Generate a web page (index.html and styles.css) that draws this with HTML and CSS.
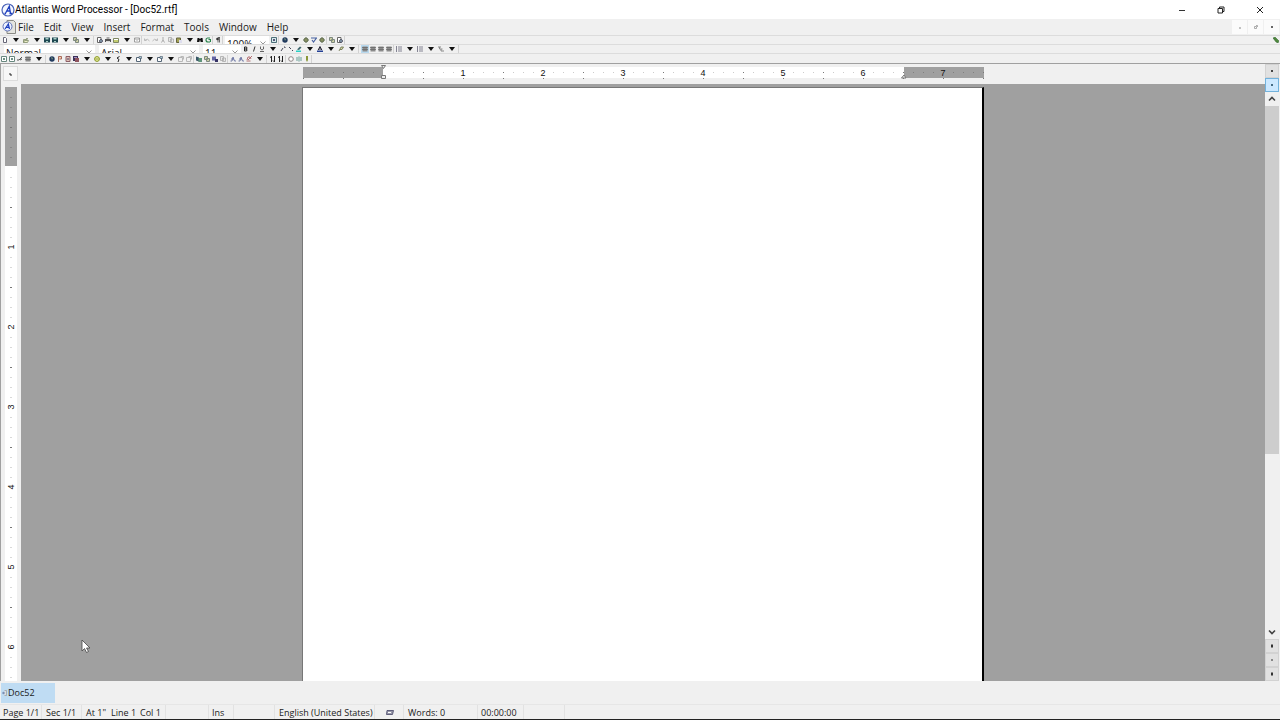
FILE: index.html
```html
<!DOCTYPE html>
<html lang="en">
<head>
<meta charset="utf-8">
<title>Atlantis Word Processor - [Doc52.rtf]</title>
<link rel="stylesheet" href="styles.css">
</head>
<body>
<svg class="defs" aria-hidden="true">
  <symbol id="logo" viewBox="0 0 14 14"><circle cx="7" cy="7" r="6" fill="#f4f7ff" stroke="#4a63b8" stroke-width="1.2"/><path d="M3.500 10.500h1.500M8.500 10.500h2.500M4.500 10.300L8.300 3.300l1.200 7M5.800 8h3.200" fill="none" stroke="#1d3fc0" stroke-width="1.300"/></symbol>
  <symbol id="down" viewBox="0 0 6 4"><path d="M0 0h6L3 4z" fill="#111"/></symbol>
  <symbol id="chev" viewBox="0 0 6 4"><path d="M.5.5L3 3 5.500.5" fill="none" stroke="#999"/></symbol>
  <symbol id="new" viewBox="0 0 6 6"><path d="M1.500.5h2l1 1v4h-3z" fill="#fff" stroke="#667"/></symbol>
  <symbol id="open" viewBox="0 0 6 6"><path d="M.5 5.500V2.500h4M.5 5.500l1-2h4l-1 2zM3 1.500h2" fill="#eef0c8" stroke="#7d8a68" stroke-width=".8"/></symbol>
  <symbol id="save" viewBox="0 0 6 6"><path d="M0 .5h6v5H0z" fill="#1c4650"/><path d="M1.500 1h3v1.500h-3zM2 4h2v1H2z" fill="#a9d0c7"/></symbol>
  <symbol id="multi" viewBox="0 0 6 6"><path d="M.5.5h3v3h-3zM2.500 2.500h3v3h-3z" fill="#cdd0a4" stroke="#7d887f"/></symbol>
  <symbol id="preview" viewBox="0 0 6 6"><path d="M.5.500h3.500v5H.5z" fill="#fff" stroke="#666"/><circle cx="4" cy="4" r="1.400" fill="#acd" stroke="#445"/></symbol>
  <symbol id="print" viewBox="0 0 6 6"><path d="M1.500 0h3v2h-3z" fill="#aaa"/><path d="M0 2h6v3H0z" fill="#555"/><path d="M1 4h4v1H1z" fill="#ddd"/></symbol>
  <symbol id="box" viewBox="0 0 6 6"><path d="M.5 1.500h5v4h-5z" fill="#c3cc70" stroke="#7e8762"/><path d="M1 2h4v1H1z" fill="#fff"/></symbol>
  <symbol id="mail" viewBox="0 0 6 6"><path d="M.5 1h5v4h-5zM1 1.500L3 3.500l2-2" fill="#fff" stroke="#888" stroke-width=".8"/></symbol>
  <symbol id="undo" viewBox="0 0 6 6"><path d="M.5 1.500v2h2M.8 3.200Q4 1 5.500 4" fill="none" stroke="#bbb"/></symbol>
  <symbol id="redo" viewBox="0 0 6 6"><path d="M5.500 1.500v2h-2M5.200 3.200Q2 1 .5 4" fill="none" stroke="#bbb"/></symbol>
  <symbol id="cut" viewBox="0 0 6 6"><path d="M3 0v3L1.500 5.500M3 3l1.500 2.500" fill="none" stroke="#aaa"/></symbol>
  <symbol id="copy" viewBox="0 0 6 6"><path d="M.5.500h3v4h-3zM2.500 2h3v3.500h-3z" fill="#e8e8e8" stroke="#aaa" stroke-width=".8"/></symbol>
  <symbol id="paste" viewBox="0 0 6 6"><path d="M.5 1h4v4.500h-4z" fill="#a4a255" stroke="#66653f"/><path d="M3 3h3v3H3z" fill="#dde"/></symbol>
  <symbol id="find" viewBox="0 0 6 6"><path d="M.5 1h2v1h1V1h2L6 5H3.500V3.500h-1V5H0z" fill="#111"/></symbol>
  <symbol id="replace" viewBox="0 0 6 6"><path d="M5 1H2.500Q1 1 1 3t2 2h2M3.500 2.500h2V5" fill="none" stroke="#27824a" stroke-width="1.200"/></symbol>
  <symbol id="para" viewBox="0 0 6 6"><path d="M3 .5h2M3 .5v5M4.500.5v5" stroke="#333" stroke-width=".7"/><circle cx="2.500" cy="2" r="1.300" fill="#333"/></symbol>
  <symbol id="panel" viewBox="0 0 6 6"><path d="M.5.500h5v5h-5z" fill="#d7e9ec" stroke="#4d6f78"/><path d="M2 2h2v2H2z" fill="#557"/></symbol>
  <symbol id="globe" viewBox="0 0 6 6"><circle cx="3" cy="3" r="2.700" fill="#223a5e"/><path d="M2 1l2 1-1 2z" fill="#7b9b7c"/></symbol>
  <symbol id="gear" viewBox="0 0 6 6"><circle cx="3" cy="3" r="2" fill="#c4c77b" stroke="#59674c"/><path d="M3 0v6M0 3h6" stroke="#59674c" stroke-width=".7"/></symbol>
  <symbol id="check" viewBox="0 0 6 6"><path d="M0 1h6M1 3l1.500 2L5.500 1" fill="none" stroke="#4560a0" stroke-width="1.200"/></symbol>
  <symbol id="bold" viewBox="0 0 6 6"><path d="M1.500 1v4M1.500 1h2q1 1 0 2h-2M3 3q2 .5.500 2h-2" fill="none" stroke="#222"/></symbol>
  <symbol id="italic" viewBox="0 0 6 6"><path d="M4 .5L2.500 5.500" stroke="#333"/></symbol>
  <symbol id="under" viewBox="0 0 6 6"><path d="M1.500.5V3q1.500 2 3 0V.5M1 5.500h4" fill="none" stroke="#555" stroke-width=".9"/></symbol>
  <symbol id="sup" viewBox="0 0 6 6"><path d="M1 5l2-3M4 1h1v1" fill="none" stroke="#445"/></symbol>
  <symbol id="sub" viewBox="0 0 6 6"><path d="M1 1l2 2M4 4.500h1" fill="none" stroke="#445"/></symbol>
  <symbol id="marker" viewBox="0 0 6 6"><path d="M1 3.500L4 .5l1.500 1L3 4z" fill="#3b646b"/><path d="M0 4.500h5V6H0z" fill="#29d0c5"/></symbol>
  <symbol id="color" viewBox="0 0 6 6"><path d="M1.200 4L3 .5 4.800 4M2 3h2" fill="none" stroke="#223"/><path d="M0 4.500h6V6H0z" fill="#233f94"/></symbol>
  <symbol id="brush" viewBox="0 0 6 6"><path d="M1 5L3 1h2.500L4 3.500H2" fill="#d2d6a8" stroke="#697047" stroke-width=".8"/></symbol>
  <symbol id="lines" viewBox="0 0 6 6"><path d="M.5.500h5v5h-5z" fill="#8a8a8a"/><path d="M0 1.500h6M0 3.500h6" stroke="#666" stroke-width=".7"/></symbol>
  <symbol id="list" viewBox="0 0 6 6"><path d="M.5 0v6M2 1h4M2 3h4M2 5h4" stroke="#778" stroke-width=".9"/></symbol>
  <symbol id="tree" viewBox="0 0 6 6"><path d="M0 1h3M1.500 3h3M3 5h3M1.500 1v2M3 3v2" fill="none" stroke="#888"/></symbol>
  <symbol id="page" viewBox="0 0 6 6"><path d="M.5.500h5v5h-5z" fill="#fff" stroke="#68887f"/><path d="M2 2h2v2H2z" fill="#6d9184"/></symbol>
  <symbol id="pen" viewBox="0 0 6 6"><path d="M0 4h2l3-3M3 4l2-1" fill="none" stroke="#555"/></symbol>
  <symbol id="red" viewBox="0 0 6 6"><path d="M1.500 6V.5h3v2.500h-2" fill="#f5cdb4" stroke="#a96a58"/></symbol>
  <symbol id="doc" viewBox="0 0 6 6"><path d="M1 .5h4v5H1z" fill="#e1c3b8" stroke="#8c5d65"/><path d="M2 3h2" stroke="#446"/></symbol>
  <symbol id="table" viewBox="0 0 6 6"><path d="M0 0h5v5H0z" fill="#3d3159"/><path d="M2 2h4v4H2z" fill="#8f545e"/><path d="M1 1h3v.8H1z" fill="#bad"/></symbol>
  <symbol id="smile" viewBox="0 0 6 6"><circle cx="3" cy="3" r="2.400" fill="#f0f5a0" stroke="#83921e"/><path d="M1.500 3h3" stroke="#66711c" stroke-width=".7"/></symbol>
  <symbol id="clip" viewBox="0 0 6 6"><path d="M4.500.5L2 2l2 1.500L3 6" fill="none" stroke="#222"/></symbol>
  <symbol id="frame" viewBox="0 0 6 6"><path d="M.5 1.500h4v4h-4z" fill="#fff" stroke="#567"/><path d="M3 .5h2.500v2H3z" fill="#acc6d3" stroke="#456" stroke-width=".6"/></symbol>
  <symbol id="pale" viewBox="0 0 6 6"><path d="M.5 1.500h4v4h-4zM2.500.5h3v3" fill="none" stroke="#b8b8b8"/></symbol>
  <symbol id="green" viewBox="0 0 6 6"><path d="M0 .5l3 1v4l-3-1z" fill="#385667"/><path d="M2.500 2H6v4H2.500z" fill="#60957a"/></symbol>
  <symbol id="violet" viewBox="0 0 6 6"><path d="M0 .5h4v4H0z" fill="#6465a4"/><path d="M3 3h3v3H3z" fill="#373466"/></symbol>
  <symbol id="sigma" viewBox="0 0 6 6"><path d="M.5 5h1.500L3 1l1.500 4H6M1 3h3" fill="none" stroke="#6870a0" stroke-width=".9"/></symbol>
  <symbol id="rose" viewBox="0 0 6 6"><path d="M.5 5h4M1 4l1-3h2l1 2M2 4l4-4" fill="none" stroke="#ad6265" stroke-width=".9"/></symbol>
  <symbol id="sort" viewBox="0 0 6 6"><path d="M1.500 0v6M4.500 0v6M0 1.500l1.500-1M3 4.500L4.500 6" stroke="#222"/></symbol>
  <symbol id="ring" viewBox="0 0 6 6"><circle cx="3" cy="3" r="2.300" fill="#fff" stroke="#8f8585"/></symbol>
  <symbol id="web" viewBox="0 0 6 6"><path d="M3 0v6M0 2h6M0 4h6M1 1v4M5 1v4" stroke="#7caaa4" stroke-width=".7"/></symbol>
  <symbol id="pencil" viewBox="0 0 6 6"><path d="M2 0h2v4L3 6 2 4z" fill="#8a9838"/></symbol>
  <symbol id="links" viewBox="0 0 6 6"><path d="M0 1l2-1 4 4-1 2-2-1zM1 1.500l1 1" fill="#4f8a3c" stroke="#2e5f2e" stroke-width=".5"/></symbol>
</svg>

<header class="titlebar">
  <svg class="logo"><use href="#logo"/></svg>
  <h1 class="title">Atlantis Word Processor - [Doc52.rtf]</h1>
  <div class="window-buttons">
    <button aria-label="Minimize"><svg viewBox="0 0 8 8"><path d="M1 4.500h6" stroke="#333"/></svg></button>
    <button aria-label="Restore"><svg viewBox="0 0 8 8"><path d="M1 2.500h4.500V7H1zM2.500 2.500V1H7v4.500H5.500" fill="none" stroke="#222"/></svg></button>
    <button aria-label="Close"><svg viewBox="0 0 8 8"><path d="M1 1l6 6M7 1L1 7" stroke="#222"/></svg></button>
  </div>
</header>

<nav class="menubar">
  <svg class="doc-logo" viewBox="0 0 14 14"><path d="M5 .5h6.500l2 2v11H5z" fill="#e4e4df" stroke="#8a8a85"/><circle cx="5.500" cy="6.500" r="4.500" fill="#eef2ff" stroke="#6073b8"/><path d="M3 9l3.300-5L7.500 9M4 7.300h3" fill="none" stroke="#1d3fc0" stroke-width="1.200"/></svg>
  <button>File</button><button>Edit</button><button>View</button><button>Insert</button><button>Format</button><button>Tools</button><button>Window</button><button>Help</button>
  <div class="child-buttons">
    <button aria-label="Minimize document"><svg viewBox="0 0 4 4"><path d="M1 3h2" stroke="#888"/></svg></button>
    <button aria-label="Restore document"><svg viewBox="0 0 4 4"><path d="M.5 1.500h2v2h-2zM2 .5h1.500V2" fill="none" stroke="#999" stroke-width=".8"/></svg></button>
    <button aria-label="Close document"><svg viewBox="0 0 4 4"><path d="M1 1l2 2M3 1L1 3" stroke="#666"/></svg></button>
  </div>
</nav>

<div class="toolbar" role="toolbar" aria-label="Standard">
  <button class="tool" aria-label="New"><svg><use href="#new"/></svg></button>
  <button class="drop" aria-label="New options"><svg><use href="#down"/></svg></button>
  <button class="tool" aria-label="Open"><svg><use href="#open"/></svg></button>
  <button class="drop" aria-label="Open options"><svg><use href="#down"/></svg></button>
  <button class="tool" aria-label="Save"><svg><use href="#save"/></svg></button>
  <button class="tool" aria-label="Save as"><svg><use href="#save"/></svg></button>
  <button class="drop" aria-label="Save options"><svg><use href="#down"/></svg></button>
  <button class="tool" aria-label="Documents"><svg><use href="#multi"/></svg></button>
  <button class="drop" aria-label="Documents options"><svg><use href="#down"/></svg></button>
  <i class="sep wide"></i>
  <button class="tool" aria-label="Preview"><svg><use href="#preview"/></svg></button>
  <button class="tool" aria-label="Print"><svg><use href="#print"/></svg></button>
  <button class="tool" aria-label="Export"><svg><use href="#box"/></svg></button>
  <button class="drop" aria-label="Export options"><svg><use href="#down"/></svg></button>
  <button class="tool" aria-label="Mail"><svg><use href="#mail"/></svg></button>
  <i class="sep"></i>
  <button class="tool" aria-label="Undo"><svg><use href="#undo"/></svg></button>
  <button class="tool" aria-label="Redo"><svg><use href="#redo"/></svg></button>
  <button class="tool" aria-label="Cut"><svg><use href="#cut"/></svg></button>
  <button class="tool" aria-label="Copy"><svg><use href="#copy"/></svg></button>
  <button class="tool" aria-label="Paste"><svg><use href="#paste"/></svg></button>
  <button class="drop" aria-label="Paste options"><svg><use href="#down"/></svg></button>
  <button class="tool" aria-label="Find"><svg><use href="#find"/></svg></button>
  <button class="tool" aria-label="Replace"><svg><use href="#replace"/></svg></button>
  <i class="sep"></i>
  <button class="tool" aria-label="Formatting marks"><svg><use href="#para"/></svg></button>
  <i class="sep"></i>
  <label class="combo zoom"><select aria-label="Zoom"><option>100%</option></select><svg><use href="#chev"/></svg></label>
  <button class="tool" aria-label="Full screen"><svg><use href="#panel"/></svg></button>
  <i class="sep wide"></i>
  <button class="tool" aria-label="Language"><svg><use href="#globe"/></svg></button>
  <button class="drop" aria-label="Language options"><svg><use href="#down"/></svg></button>
  <button class="tool" aria-label="Options"><svg><use href="#gear"/></svg></button>
  <button class="tool" aria-label="Spelling"><svg><use href="#check"/></svg></button>
  <button class="tool" aria-label="Autocorrect"><svg><use href="#gear"/></svg></button>
  <i class="sep"></i>
  <button class="tool" aria-label="Tip"><svg><use href="#multi"/></svg></button>
  <button class="tool" aria-label="Home"><svg><use href="#preview"/></svg></button>
  <i class="sep"></i>
  <button class="tool end" aria-label="Customize"><svg><use href="#links"/></svg></button>
</div>

<div class="toolbar" role="toolbar" aria-label="Formatting">
  <label class="combo style"><select aria-label="Style"><option>Normal</option></select><svg><use href="#chev"/></svg></label>
  <label class="combo font"><select aria-label="Font"><option>Arial</option></select><svg><use href="#chev"/></svg></label>
  <label class="combo size"><select aria-label="Font size"><option>11</option></select><svg><use href="#chev"/></svg></label>
  <button class="tool" aria-label="Bold"><svg><use href="#bold"/></svg></button>
  <button class="tool" aria-label="Italic"><svg><use href="#italic"/></svg></button>
  <button class="tool" aria-label="Underline"><svg><use href="#under"/></svg></button>
  <button class="drop" aria-label="Underline options"><svg><use href="#down"/></svg></button>
  <button class="tool" aria-label="Superscript"><svg><use href="#sup"/></svg></button>
  <button class="tool" aria-label="Subscript"><svg><use href="#sub"/></svg></button>
  <button class="tool" aria-label="Highlight"><svg><use href="#marker"/></svg></button>
  <button class="drop" aria-label="Highlight options"><svg><use href="#down"/></svg></button>
  <button class="tool" aria-label="Font color"><svg><use href="#color"/></svg></button>
  <button class="drop" aria-label="Font color options"><svg><use href="#down"/></svg></button>
  <button class="tool" aria-label="Format painter"><svg><use href="#brush"/></svg></button>
  <button class="drop" aria-label="Format painter options"><svg><use href="#down"/></svg></button>
  <i class="sep wide"></i>
  <button class="tool on" aria-label="Align left"><svg><use href="#lines"/></svg></button>
  <button class="tool" aria-label="Center"><svg><use href="#lines"/></svg></button>
  <button class="tool" aria-label="Align right"><svg><use href="#lines"/></svg></button>
  <button class="tool" aria-label="Justify"><svg><use href="#lines"/></svg></button>
  <i class="sep"></i>
  <button class="tool" aria-label="Bullets"><svg><use href="#list"/></svg></button>
  <button class="drop" aria-label="Bullets options"><svg><use href="#down"/></svg></button>
  <button class="tool" aria-label="Numbering"><svg><use href="#list"/></svg></button>
  <button class="drop" aria-label="Numbering options"><svg><use href="#down"/></svg></button>
  <button class="tool" aria-label="Outline"><svg><use href="#tree"/></svg></button>
  <button class="drop" aria-label="Outline options"><svg><use href="#down"/></svg></button>
  <i class="sep"></i>
</div>

<div class="toolbar last" role="toolbar" aria-label="Insert">
  <button class="tool" aria-label="Page setup"><svg><use href="#page"/></svg></button>
  <button class="tool" aria-label="Header"><svg><use href="#page"/></svg></button>
  <button class="tool" aria-label="Note"><svg><use href="#pen"/></svg></button>
  <button class="tool" aria-label="Columns"><svg><use href="#lines"/></svg></button>
  <button class="drop" aria-label="Columns options"><svg><use href="#down"/></svg></button>
  <i class="sep wide"></i>
  <button class="tool" aria-label="Hyperlink"><svg><use href="#globe"/></svg></button>
  <button class="tool" aria-label="Bookmark"><svg><use href="#red"/></svg></button>
  <button class="tool" aria-label="Field"><svg><use href="#doc"/></svg></button>
  <button class="tool" aria-label="Picture"><svg><use href="#table"/></svg></button>
  <button class="drop" aria-label="Picture options"><svg><use href="#down"/></svg></button>
  <button class="tool" aria-label="Symbol"><svg><use href="#smile"/></svg></button>
  <button class="drop" aria-label="Symbol options"><svg><use href="#down"/></svg></button>
  <button class="tool" aria-label="Clip"><svg><use href="#clip"/></svg></button>
  <button class="drop" aria-label="Clip options"><svg><use href="#down"/></svg></button>
  <button class="tool" aria-label="Section"><svg><use href="#frame"/></svg></button>
  <button class="drop" aria-label="Section options"><svg><use href="#down"/></svg></button>
  <button class="tool" aria-label="Frame"><svg><use href="#frame"/></svg></button>
  <button class="drop" aria-label="Frame options"><svg><use href="#down"/></svg></button>
  <button class="tool" aria-label="Group"><svg><use href="#pale"/></svg></button>
  <button class="tool" aria-label="Ungroup"><svg><use href="#pale"/></svg></button>
  <i class="sep"></i>
  <button class="tool" aria-label="Import"><svg><use href="#green"/></svg></button>
  <button class="tool" aria-label="Attach"><svg><use href="#multi"/></svg></button>
  <button class="tool" aria-label="Clip library"><svg><use href="#violet"/></svg></button>
  <button class="tool" aria-label="Copy format"><svg><use href="#copy"/></svg></button>
  <i class="sep"></i>
  <button class="tool" aria-label="Uppercase"><svg><use href="#sigma"/></svg></button>
  <button class="tool" aria-label="Lowercase"><svg><use href="#sigma"/></svg></button>
  <button class="tool" aria-label="Title case"><svg><use href="#rose"/></svg></button>
  <button class="drop" aria-label="Case options"><svg><use href="#down"/></svg></button>
  <i class="sep wide"></i>
  <button class="tool" aria-label="Sort"><svg><use href="#sort"/></svg></button>
  <button class="tool" aria-label="Sort descending"><svg><use href="#sort"/></svg></button>
  <i class="sep"></i>
  <button class="tool" aria-label="Circle"><svg><use href="#ring"/></svg></button>
  <button class="tool" aria-label="Web"><svg><use href="#web"/></svg></button>
  <button class="tool" aria-label="Edit"><svg><use href="#pencil"/></svg></button>
  <i class="sep"></i>
</div>

<main class="workspace">
  <div class="corner"><button aria-label="Tab type"><svg viewBox="0 0 4 4"><path d="M1 1v2h2" fill="none" stroke="#222"/></svg></button></div>
  <div class="hruler">
    <svg class="hscale" viewBox="0 0 682 18">
      <defs><pattern id="hticks" width="80" height="18" patternUnits="userSpaceOnUse"><path d="M10 8h1v1h-1zM20 8h1v1h-1zM30 8h1v1h-1zM50 8h1v1h-1zM60 8h1v1h-1zM70 8h1v1h-1z" fill="#000" fill-opacity=".2"/><path d="M40 8h1v1h-1zM40 14h1v1h-1zM0 14h1v1h-1z" fill="#777"/></pattern></defs>
      <path d="M0 3h80v11H0zM601 3h80v11h-80z" fill="#a0a0a0"/><path d="M80 3h521v11H80z" fill="#fff"/><path d="M0 0h682v18H0z" fill="url(#hticks)"/>
      <path d="M78.500 1.500h4l-2 3zM78.500 11.500h4v3h-4zM598.500 14l2.500-3 2 3z" fill="#eee" stroke="#777"/>
      <g class="num"><text x="160" y="12">1</text><text x="240" y="12">2</text><text x="320" y="12">3</text><text x="400" y="12">4</text><text x="480" y="12">5</text><text x="560" y="12">6</text><text x="640" y="12">7</text></g>
    </svg>
  </div>
  <div class="vruler">
    <svg class="vscale">
      <defs><pattern id="vticks" width="12" height="80" patternUnits="userSpaceOnUse"><path d="M5 10h2v1H5zM5 20h2v1H5zM5 30h2v1H5zM5 50h2v1H5zM5 60h2v1H5zM5 70h2v1H5z" fill="#000" fill-opacity=".15"/><path d="M5 40h2v1H5z" fill="#777"/></pattern></defs>
      <path d="M0 0h12v79H0z" fill="#a0a0a0"/><path d="M0 0h12v2000H0z" fill="url(#vticks)"/>
      <g class="num"><text transform="translate(9 160) rotate(-90)">1</text><text transform="translate(9 240) rotate(-90)">2</text><text transform="translate(9 320) rotate(-90)">3</text><text transform="translate(9 400) rotate(-90)">4</text><text transform="translate(9 480) rotate(-90)">5</text><text transform="translate(9 560) rotate(-90)">6</text></g>
    </svg>
  </div>
  <section class="canvas">
    <article class="page" contenteditable="true" aria-label="Document"></article>
    <svg class="pointer" viewBox="0 0 10 15"><path d="M1 1v11l2.500-2.500 2 4 2-1-2-3.500H9z" fill="#fff" stroke="#444" stroke-width=".8"/></svg>
  </section>
  <aside class="scrollbar">
    <button class="nav" aria-label="Split"><svg viewBox="0 0 4 4"><path d="M1 1h2v2H1z" fill="#444"/></svg></button>
    <button class="nav on" aria-label="Ruler"><svg viewBox="0 0 4 4"><path d="M1 1h2v2H1z" fill="#456b84"/></svg></button>
    <button class="arrow" aria-label="Scroll up"><svg viewBox="0 0 8 8"><path d="M1 5.500L4 2.500l3 3" fill="none" stroke="#444" stroke-width="1.600"/></svg></button>
    <div class="track"><div class="thumb"></div></div>
    <button class="arrow" aria-label="Scroll down"><svg viewBox="0 0 8 8"><path d="M1 2.500l3 3 3-3" fill="none" stroke="#444" stroke-width="1.600"/></svg></button>
    <button class="nav" aria-label="Previous page"><svg viewBox="0 0 4 4"><path d="M1 .5h2v3H1z" fill="#333"/></svg></button>
    <button class="nav" aria-label="Browse by"><svg viewBox="0 0 4 4"><path d="M1 1h2v2H1z" fill="#888"/></svg></button>
    <button class="nav" aria-label="Next page"><svg viewBox="0 0 4 4"><path d="M1 .5h2v3H1z" fill="#333"/></svg></button>
  </aside>
</main>

<div class="tabs"><button class="tab"><svg viewBox="0 0 5 6"><path d="M2.500.500h2v5h-2" fill="#ddd" stroke="#999" stroke-width=".7"/><circle cx="1.500" cy="3" r="1.200" fill="#7d8fb4"/></svg>Doc52</button></div>

<footer class="status">
  <span class="cell c-page">Page 1/1</span><span class="cell c-sec">Sec 1/1</span><span class="cell c-pos"><span class="at">At 1"</span><span class="line">Line 1</span><span>Col 1</span></span><span class="cell c-gap"></span><span class="cell c-ins">Ins</span><span class="cell c-blank"></span><span class="cell c-lang">English (United States)</span><span class="cell c-kb"><svg viewBox="0 0 8 5"><path d="M1 .5h6.500L6.500 4.500H.5z" fill="#99a" stroke="#446" stroke-width=".8"/><path d="M2 2.500h3" stroke="#fff"/></svg></span><span class="cell c-words">Words: 0</span><span class="cell c-time">00:00:00</span><span class="cell c-end"></span><span class="cell c-rest"></span>
</footer>
</body>
</html>
```
FILE: styles.css
```css
* { box-sizing: border-box; }
body { margin: 0; min-height: 100vh; display: flex; flex-direction: column; background: #f0f0f0; color: #1a1a1a; font: 10px/16px "Open Sans", "Noto Sans", sans-serif; overflow: hidden; }
button { margin: 0; padding: 0; border: 0; background: none; font: inherit; color: inherit; display: flex; align-items: center; justify-content: center; }
svg { display: block; flex: none; }
.defs { position: absolute; width: 0; height: 0; }

.titlebar { display: flex; align-items: center; height: 19px; background: #fff; padding: 0 1px; }
.logo { width: 14px; height: 14px; }
.title { margin: 0; font: 400 10px/19px Roboto, sans-serif; color: #000; flex: 1; white-space: nowrap; }
.window-buttons { display: flex; }
.window-buttons button { width: 39px; height: 18px; }
.window-buttons svg { width: 8px; height: 8px; }

.menubar { display: flex; align-items: center; height: 16px; padding-left: 2px; }
.doc-logo { width: 14px; height: 14px; margin-right: 2px; }
.menubar button { margin-right: 10px; }
.child-buttons { margin-left: auto; display: flex; padding-right: 1px; }
.menubar .child-buttons button { width: 16px; height: 14px; margin: 0; background: #fbfbfb; border-left: 1px solid #f0f0f0; }
.child-buttons svg { width: 4px; height: 4px; }

.toolbar { display: flex; align-items: center; height: 9px; border-top: 1px solid #dcdcdc; padding-left: 1px; }
.toolbar.last { height: 10px; padding-left: 0; }
.tool { width: 8px; height: 8px; }
.tool svg { width: 6px; height: 6px; }
.tool.on { background: #b9d9ee; }
.tool.end { margin-left: auto; }
.drop { width: 13px; height: 8px; }
.drop svg { width: 6px; height: 4px; }
.sep { width: 1px; height: 8px; margin-right: 1px; background: #d2d2d2; }
.sep.wide { margin-right: 2px; }
.combo { position: relative; display: block; height: 8px; background: #fff; overflow: hidden; }
.combo select { display: block; width: 100%; height: 16px; margin: 0; padding: 0 0 0 2px; border: 0; background: #fff; appearance: none; color: #111; font: 10px/16px "Open Sans", "Noto Sans", sans-serif; }
.combo svg { position: absolute; right: 3px; bottom: -1px; width: 6px; height: 4px; }
.zoom { width: 44px; margin: 0 1px; }
.style { width: 91px; margin: 0 4px 0 3px; }
.font { width: 100px; }
.size { width: 38px; margin: 0 1px 0 4px; }

.workspace { flex: 1; min-height: 0; display: grid; grid-template: 20px 1fr / 20px 1fr 14px; border-top: 1px solid #a0a0a0; border-left: 1px solid #a0a0a0; padding-right: 1px; }
.corner { padding: 2px; }
.corner button { width: 15px; height: 15px; border: 1px solid #dcdcdc; background: #f7f7f7; }
.corner svg { width: 4px; height: 4px; }
.hruler { display: flex; justify-content: center; padding-left: 1px; overflow: hidden; }
.hscale { width: 682px; height: 18px; }
.num text { font: 9px/9px "Liberation Sans", sans-serif; text-anchor: middle; fill: #111; }
.vruler { grid-area: 2 / 1; display: flex; padding: 3px 4px 0; overflow: hidden; }
.vscale { width: 12px; height: 100%; background: #fff; }
.canvas { grid-area: 2 / 2; position: relative; display: flex; justify-content: center; background: #a0a0a0; padding: 3px 0 0; }
.page { width: 682px; background: #fff; border: 1px solid #777; border-right: 2px solid #000; border-bottom: 0; outline: 0; }
.pointer { position: absolute; left: 60px; bottom: 27px; width: 10px; height: 15px; }

.scrollbar { grid-area: 1 / 3 / 3 / 4; display: flex; flex-direction: column; }
.nav { height: 14px; background: #e1e1e1; border: 1px solid #d2d2d2; }
.nav svg { width: 4px; height: 4px; }
.nav.on { background: #cce8ff; border-color: #72b2dc; }
.arrow { height: 14px; }
.arrow svg { width: 8px; height: 8px; }
.track { flex: 1; }
.thumb { height: 67%; background: #cdcdcd; }

.tabs { height: 23px; display: flex; padding: 2px 0 1px 1px; }
.tab { width: 54px; background: #bfdcf3; font-size: 9px; justify-content: flex-start; padding-left: 1px; gap: 1px; }
.tab svg { width: 5px; height: 6px; }

.status { display: flex; height: 16px; border-top: 1px solid #e6e6e6; border-bottom: 1px solid #222; font-size: 9px; line-height: 14px; white-space: nowrap; }
.cell { display: flex; align-items: center; border-right: 1px solid #e2e2e2; padding: 1px 0 0 3px; }
.c-page { width: 42px; }
.c-sec { width: 40px; padding-left: 4px; }
.c-pos { width: 84px; padding-left: 4px; }
.at { width: 25px; }
.line { width: 29px; }
.c-gap { width: 43px; }
.c-ins { width: 25px; }
.c-blank { width: 41px; }
.c-lang { width: 100px; padding-left: 4px; }
.c-kb { width: 29px; padding-left: 11px; }
.c-kb svg { width: 8px; height: 5px; }
.c-words { width: 74px; padding-left: 4px; }
.c-time { width: 46px; }
.c-end { width: 41px; }
.c-rest { flex: 1; border-right: 0; }
```
